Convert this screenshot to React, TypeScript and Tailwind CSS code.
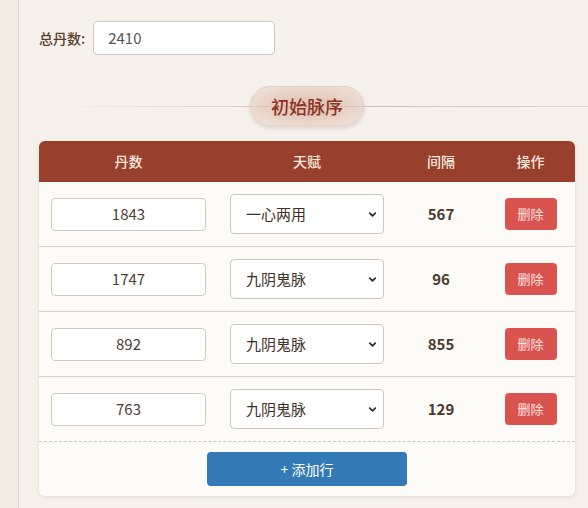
import { ChevronDown } from 'lucide-react';

const rows = [
  { dan: '1843', talent: '一心两用', gap: 567 },
  { dan: '1747', talent: '九阴鬼脉', gap: 96 },
  { dan: '892', talent: '九阴鬼脉', gap: 855 },
  { dan: '763', talent: '九阴鬼脉', gap: 129 },
];

const font = { fontFamily: '"Noto Sans CJK SC", "Noto Sans", sans-serif' };

export default function App() {
  return (
    <div className="flex h-[508px] w-full overflow-hidden bg-[#f1ece4]" style={font}>
      <div className="w-[18px] shrink-0" />
      <div className="flex-1 border-l border-[#ddd3c6] bg-[#f6f2eb] pt-[21px] pl-[20px] pr-[13px]">
        <div className="flex items-center gap-2">
          <span className="text-[14px] font-medium text-[#5a4030]">总丹数:</span>
          <div className="flex h-[34px] w-[182px] items-center rounded border border-[#cfc6bc] bg-white px-[14px] text-[15px] text-[#555]">
            2410
          </div>
        </div>

        <div className="relative mt-[31px] flex h-[40px] items-center justify-center">
          <div className="absolute left-[12px] right-[-13px] top-1/2 h-px bg-gradient-to-r from-transparent via-[#cbbfb2] to-[#ddd3c6]" />
          <div className="relative flex h-[40px] w-[114px] items-center justify-center rounded-full border border-[#e2d2c8] bg-[radial-gradient(ellipse_at_center,rgba(214,170,155,0.75),rgba(236,220,210,0.55))] text-[18px] font-medium text-[#8c3424] shadow-[0_2px_4px_rgba(120,80,60,0.2)]">
            初始脉序
          </div>
        </div>

        <div className="mt-[15px] overflow-hidden rounded-md bg-[#fdfbf8] shadow-[0_1px_4px_rgba(110,80,60,0.15)]">
          <div className="grid h-[41px] grid-cols-[179px_178px_90px_1fr] items-center bg-[#983f2e] text-[14px] font-medium text-[#f6e9dc]">
            <div className="text-center">丹数</div>
            <div className="text-center">天赋</div>
            <div className="text-center">间隔</div>
            <div className="text-center">操作</div>
          </div>
          {rows.map((r, i) => (
            <div
              key={i}
              className={`grid h-[65px] grid-cols-[179px_178px_90px_1fr] items-center ${
                i < rows.length - 1 ? 'border-b border-[#ddd4c9]' : 'border-b border-dashed border-[#cfc6bb]'
              }`}
            >
              <div className="pl-[12px]">
                <div className="flex h-[33px] w-[155px] items-center justify-center rounded border border-[#d3cac0] bg-white text-[15px] text-[#4d4035]">
                  {r.dan}
                </div>
              </div>
              <div className="pl-[12px]">
                <div className="flex h-[40px] w-[154px] items-center justify-between rounded border border-[#cfc6bc] bg-white pl-[15px] pr-[5px] text-[15px] text-[#3e3128]">
                  {r.talent}
                  <ChevronDown className="h-[11px] w-[11px] text-[#333]" strokeWidth={4} />
                </div>
              </div>
              <div className="text-center text-[15px] font-semibold text-[#4a3a2c]">{r.gap}</div>
              <div className="flex justify-center">
                <button className="h-[32px] w-[52px] rounded bg-[#d9534f] text-[13px] text-[#fbe3e0]">删除</button>
              </div>
            </div>
          ))}
          <div className="flex justify-center py-[10px]">
            <button className="h-[34px] w-[200px] rounded bg-[#337ab7] text-[14px] text-white">+ 添加行</button>
          </div>
        </div>
      </div>
    </div>
  );
}
